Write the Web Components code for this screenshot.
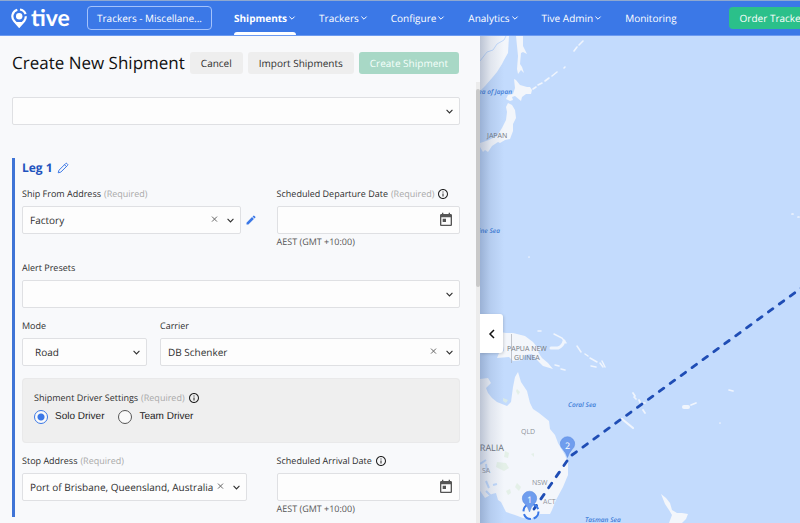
<!DOCTYPE html>
<html lang="en">
<head>
<meta charset="utf-8">
<title>Create New Shipment</title>
<style>
  html, body { height: 100%; }
  body { margin: 0; font: 10px/16px "Open Sans", "Noto Sans", sans-serif; text-rendering: geometricPrecision; color: #2f2f2f; background: #f8f9fb; overflow: hidden; }
</style>
</head>
<body>
<tive-app></tive-app>
<script>
const CHEVRON = '<svg class="chev" viewBox="0 0 8 8" width="8" height="8" aria-hidden="true"><path d="M1.4 2.6 4 5.2 6.6 2.6" fill="none" stroke="currentColor" stroke-width="1"/></svg>';
const INFO = '<svg viewBox="0 0 24 24" width="12" height="12" role="img" aria-label="Info"><path fill="#222" d="M11 7h2v2h-2zm0 4h2v6h-2zm1-9C6.48 2 2 6.48 2 12s4.48 10 10 10 10-4.48 10-10S17.52 2 12 2zm0 18c-4.41 0-8-3.59-8-8s3.59-8 8-8 8 3.59 8 8-3.59 8-8 8z"/></svg>';
const RESET = '*{box-sizing:border-box} button,select,input{font:inherit;color:inherit;margin:0;text-rendering:inherit} button{border:0;background:none;padding:0;cursor:pointer} svg{display:block;flex:none}';

function define(name, html) {
  customElements.define(name, class extends HTMLElement {
    constructor() {
      super();
      this.attachShadow({ mode: 'open' });
    }
    connectedCallback() {
      const t = document.createElement('template');
      const markup = typeof html === 'function' ? html(this) : html;
      t.innerHTML = '<style>' + RESET + '</style>' + markup;
      this.shadowRoot.replaceChildren(t.content.cloneNode(true));
    }
  });
}

define('tive-logo', `
<style>
  :host { display: block; }
  a { display: flex; align-items: center; gap: 4px; color: #fff; text-decoration: none; font: 700 23px/28px Lato, sans-serif; }
  span { padding-bottom: 2px; }
</style>
<a href="#" aria-label="tive home">
  <svg viewBox="0 0 16 20" width="16" height="20" aria-hidden="true">
    <path d="M6.3 1.7A6.9 6.9 0 0 0 3.2 13l5 5.6 5-5.6a6.9 6.9 0 0 0 1.6-4.7" fill="none" stroke="#fff" stroke-width="2.2"/>
    <path d="M9 1.500a7 7 0 0 1 5.600 4.700" fill="none" stroke="#fff" stroke-width="2.2"/>
    <path d="M4.500 14h7.400l-3.700 4.600z" fill="#fff"/>
    <circle cx="8.2" cy="8.2" r="3.2" fill="#fff"/>
  </svg><span>tive</span>
</a>`);

define('nav-item', el => `
<style>
  :host { display: flex; flex: none; }
  button, a { display: flex; align-items: center; gap: 1px; height: 100%; color: #fff; text-decoration: none; position: relative; white-space: nowrap; }
  :host([active]) { font-weight: 700; }
  :host([active]) button::after { content: ""; position: absolute; left: 0; right: 0; bottom: 0; height: 3px; background: #fff; border-radius: 3px 3px 0 0; }
</style>
${el.hasAttribute('href') ? `<a href="${el.getAttribute('href')}"><slot></slot></a>` : `<button type="button" aria-haspopup="true"><slot></slot>${CHEVRON}</button>`}`);

define('app-header', `
<style>
  :host { display: flex; align-items: stretch; height: 36px; flex: none; background: #3b78e7; border-top: 1px solid #8fa8cf; border-bottom: 1px solid #6c9af0; padding-left: 11px; color: #fff; overflow: hidden; }
  tive-logo { align-self: center; flex: none; width: 76px; }
  .account { align-self: center; flex: none; width: 125px; height: 24px; border: 1px solid #a4c2fb; border-radius: 4px; }
  nav { display: flex; gap: 23px; margin-left: 22px; flex: none; }
  .order { align-self: center; flex: none; margin-left: 52px; padding: 0 11px; height: 22px; border-radius: 4px; background: #2bc08a; }
</style>
<tive-logo></tive-logo>
<button class="account" type="button">Trackers - Miscellane...</button>
<nav>
  <nav-item active>Shipments</nav-item>
  <nav-item>Trackers</nav-item>
  <nav-item>Configure</nav-item>
  <nav-item>Analytics</nav-item>
  <nav-item>Tive Admin</nav-item>
  <nav-item href="#monitoring">Monitoring</nav-item>
</nav>
<button class="order" type="button">Order Trackers</button>`);

const FIELD_STYLE = `
  :host { display: block; min-width: 0; }
  .label { display: flex; align-items: center; gap: 3px; height: 16px; margin-bottom: 4px; font-size: 9px; white-space: nowrap; }
  .req { color: #a9a9a9; }
  .row { display: flex; align-items: center; }
  .box { position: relative; flex: 1; min-width: 0; height: 28px; }
  select, input { display: block; width: 100%; height: 100%; border: 1px solid #dfe0e3; border-radius: 2px; background: #fdfdfd; padding: 0 7px; appearance: none; outline: 0; text-overflow: ellipsis; }
`;
const labelMarkup = el => el.hasAttribute('label') ? `<div class="label"><label for="c">${el.getAttribute('label')}</label>${el.hasAttribute('required') ? '<span class="req">(Required)</span>' : ''}${el.hasAttribute('info') ? INFO : ''}</div>` : '';

define('select-field', el => `
<style>${FIELD_STYLE}
  :host([inset]) select { padding-left: 12px; }
  :host([trail]) .row { padding-right: 20px; }
  .chev { position: absolute; right: 6px; top: 10px; pointer-events: none; }
  .clear { position: absolute; right: 22px; top: 9px; width: 9px; height: 9px; color: #666; }
  .edit { width: 22px; height: 20px; margin-left: 4px; }
</style>
${labelMarkup(el)}
<div class="row"><div class="box">
  <select id="c" ${el.hasAttribute('label') ? '' : 'aria-label="Shipment template"'}><option>${el.getAttribute('value') || ''}</option></select>
  ${el.hasAttribute('clearable') ? '<button class="clear" type="button" aria-label="Clear"><svg viewBox="0 0 9 9" width="9" height="9"><path d="M2 1.6 7 6.6M7 1.6 2 6.6" fill="none" stroke="currentColor"/></svg></button>' : ''}
  ${CHEVRON.replace('width="8" height="8"', 'width="9" height="9"')}
</div>${el.hasAttribute('editable') ? '<button class="edit" type="button" aria-label="Edit address"><svg viewBox="0 0 24 24" width="12" height="12"><path fill="#3b78e7" d="M3 17.25V21h3.75L17.81 9.94l-3.75-3.75L3 17.25zM20.71 7.04a1 1 0 0 0 0-1.41l-2.34-2.34a1 1 0 0 0-1.41 0l-1.83 1.83 3.75 3.75 1.83-1.83z"/></svg></button>' : ''}</div>`);

define('date-field', el => `
<style>${FIELD_STYLE}
  button { position: absolute; right: 6px; top: 6px; }
  .zone { font-size: 9px; color: #555; }
</style>
${labelMarkup(el)}
<div class="row"><div class="box">
  <input id="c" type="text" autocomplete="off">
  <button type="button" aria-label="Open calendar"><svg viewBox="0 0 24 24" width="16" height="16"><path fill="#555" d="M19 3h-1V1h-2v2H8V1H6v2H5c-1.11 0-1.99.9-1.99 2L3 19c0 1.1.89 2 2 2h14c1.1 0 2-.9 2-2V5c0-1.1-.9-2-2-2zm0 16H5V8h14v11zM7 10h5v5H7z"/></svg></button>
</div></div>
<div class="zone">AEST (GMT +10:00)</div>`);

define('driver-settings', `
<style>
  :host { display: block; margin-top: 2px; }
  fieldset { margin: 0; min-width: 0; height: 65px; padding: 11px; border: 1px solid #e9e9ea; border-radius: 4px; background: #efefef; }
  .head { display: flex; align-items: center; gap: 3px; font-size: 9px; }
  .req { color: #a9a9a9; }
  .opts { display: flex; gap: 14px; margin-top: 3px; font-family: "Liberation Sans", sans-serif; color: #222; }
  label { display: flex; align-items: center; gap: 7px; }
  input { appearance: none; width: 14px; height: 14px; border: 1px solid #555; border-radius: 50%; background: #fafafa; }
  input:checked { border-color: #3b78e7; background: radial-gradient(circle, #3b78e7 3px, #fafafa 4px); }
</style>
<fieldset aria-labelledby="t">
  <div class="head"><span id="t">Shipment Driver Settings</span><span class="req">(Required)</span>${INFO}</div>
  <div class="opts">
    <label><input type="radio" name="driver" checked>Solo Driver</label>
    <label><input type="radio" name="driver">Team Driver</label>
  </div>
</fieldset>`);

define('shipment-leg', el => `
<style>
  :host { display: block; border-left: 3px solid #3f74d6; padding-left: 7px; }
  header { display: flex; align-items: center; gap: 4px; height: 20px; margin-bottom: 8px; }
  h2 { margin: 0; font-size: 12px; line-height: 20px; color: #2152bd; }
  .rows { display: grid; gap: 10px; }
</style>
<header><h2>${el.getAttribute('heading')}</h2>
  <button type="button" aria-label="Rename leg"><svg viewBox="0 0 12 12" width="12" height="12"><path d="M1.2 10.8 2 8.2 8.6 1.6q.7-.7 1.4 0l.5.5q.7.7 0 1.4L3.8 10.1zM7.5 2.7l1.9 1.9" fill="none" stroke="#3b78e7"/></svg></button>
</header>
<div class="rows"><slot></slot></div>`);

define('form-row', `
<style>
  :host { display: grid; grid-template-columns: 4fr 3fr; gap: 10px; align-items: start; }
  :host([kind="carrier"]) { grid-template-columns: 5fr 12fr; gap: 13px; }
</style><slot></slot>`);

define('shipment-panel', `
<style>
  :host { display: flex; flex-direction: column; background: #f8f9fb; min-width: 0; }
  .top { display: flex; align-items: center; gap: 5px; padding: 16px 12px 8px; white-space: nowrap; }
  h1 { margin: 0; font-size: 17px; line-height: 22px; font-weight: 400; color: #111; }
  .top button { height: 22px; padding: 0 11px; border-radius: 3px; background: #eee; }
  .top button.primary { background: #a8d8c6; color: #f5fffb; }
  .body { display: flex; flex: 1; min-height: 0; overflow: hidden; }
  form { flex: 1; min-width: 0; padding: 15px 16px 0 12px; }
  shipment-leg { margin-top: 33px; }
  .bar { flex: none; width: 4px; background: #ececec; }
  .bar::before { content: ""; display: block; height: 45%; margin-top: 7px; background: #c9c9c9; border-radius: 2px; }
</style>
<div class="top"><h1>Create New Shipment</h1><button type="button">Cancel</button><button type="button">Import Shipments</button><button type="button" class="primary">Create Shipment</button></div>
<div class="body">
  <form>
    <select-field></select-field>
    <shipment-leg heading="Leg 1">
      <form-row>
        <select-field label="Ship From Address" required value="Factory" clearable editable></select-field>
        <date-field label="Scheduled Departure Date" required info></date-field>
      </form-row>
      <select-field label="Alert Presets"></select-field>
      <form-row kind="carrier">
        <select-field label="Mode" value="Road" inset></select-field>
        <select-field label="Carrier" value="DB Schenker" clearable></select-field>
      </form-row>
      <driver-settings></driver-settings>
      <form-row>
        <select-field label="Stop Address" required value="Port of Brisbane, Queensland, Australia" clearable trail></select-field>
        <date-field label="Scheduled Arrival Date" info></date-field>
      </form-row>
    </shipment-leg>
  </form>
  <div class="bar"></div>
</div>`);

define('route-map', `
<style>
  :host { display: block; position: relative; min-width: 0; overflow: hidden; background: #c3dbfd; }
  .map { width: 100%; height: 100%; }
  .shade { position: absolute; inset: 0 auto 0 0; width: 24px; background: linear-gradient(90deg, rgba(60,80,120,.3), rgba(60,80,120,.1) 45%, transparent); pointer-events: none; }
  .fold { position: absolute; left: 0; top: 278px; width: 23px; height: 39px; background: #fff; border-radius: 0 3px 3px 0; display: grid; place-items: center; box-shadow: 1px 1px 3px rgba(0,0,0,.15); }
  text { font-family: "Open Sans", sans-serif; }
  .sea text { font-size: 6.5px; font-style: italic; fill: #3d7bd8; font-weight: 600; }
  .place text { font-size: 7px; fill: #6f747b; }
</style>
<svg class="map" viewBox="480 36 320 487" preserveAspectRatio="xMinYMin slice" role="img" aria-label="Shipment route map">
  <g fill="#f3f6fb">
    <path d="M480 36h29l-1 17-4 7-2 4-5 8-5 6-7 8-5 5z"/>
    <path d="M516 36l1 10 1 10-1 13 1 5 3-4 3 3-2-6-2-3 1-11 2-1 4 2-4-8 0-10z"/>
    <path d="M514 79l2 1 4 5 7 2 3 0 2 3-1 4-5 0-4 3-1 4-6-5-3 1 1 3-3 1-4-2 2-4 5-1 2-6z"/>
    <path d="M508 103l4 2 3 5 1 8-3 6 0 7-3 8-5 1-5 3-2-1-6 4-4 6-3-2-2 2-3-5 0-4 9-3 8-4 5-8 4-8 1-8-1-5z"/>
    <path d="M500 332l6 1 7 0 12 3 8 6 4 5 6 1-5 4 4 6 6 5 5 6-10-3-5-5-6-7-7 1-2 5-10 1-4-4-12 1 2-5 5-2z"/>
    <path d="M480 379l8-1 3 5-5 5 2 5 4 5 5 4 10 4 4-4 2-15 2-10 3-5 3 10 6 9 3 12 3 6 6 4 5 4 5 4 1 8 5 6 3 8 7 12 3 8 0 12-5 12-7 13-4 10-2 4-10 0-9 5-8-1-8-3-9-3-5-10-3-2-2-7-4 1-7 4-7-10z"/>
    <path d="M661 494l5 4 4 5 2 7 5 3 5 0 6 1-2 5-4 4h-13l3-8-3-5-4-6z"/>
  </g>
  <g fill="none" stroke="#f0f5fd" stroke-linecap="round">
    <path d="M533 89l3-2m2-2l4-2m3-2l4-3m3-2l5-4m7-4l1-1m9-16l3-4m2-2l4-4" stroke-width="1.6"/>
    <path d="M551 348h7q5-2 6-7" stroke-width="3"/>
    <path d="M554 334l8 4 4 5M538 331l3 0M577 346l4 6m4 2l3 2m2 2l7 4m3 1l3 4m-1-6l3 6m-14-1l5 1m-41-2l4 1m2 3l4 1" stroke-width="1.5"/>
    <path d="M622 419l11 9" stroke-width="2.2"/>
    <path d="M633 393l2 3m-1 1l2 2m3 1l1 2m3 1l2 0m-2 7l2 3m46-8l5-2m33-13l4 1M529 257h0m263-43h1m5 3h1m-79 206h0" stroke-width="1.7"/>
    <path d="M684 407h4" stroke-width="4"/>
  </g>
  <g fill="#dfeee2"><path d="M517 389l3 3-2 3-2-4zM503 398l5 2-2 3-3-2zM505 451l4 2-1 5-4-1zM497 462l9 1 3 5-5 3-8-4zM517 483l4 4-2 4-4-4zM531 454l3-1 0 4zM506 491l4-2 1 4-3 2z" opacity=".75"/></g>
  <g fill="none" stroke="#c3dbfd" stroke-width="2"><path d="M480 464l6-4m0 4l1 7m-1 10l3 7m4-3l4-1m-11 7l5 5"/><path d="M480 61l7-9 6-2 4-6 7-4 2-4" stroke-width="1"/></g>
  <path d="M511.500 334v29" stroke="#a9aeb6" stroke-width=".7"/>
  <g class="sea">
    <text x="512" y="94" text-anchor="end">Sea of Japan</text>
    <text x="500" y="233" text-anchor="end">Philippine Sea</text>
    <text x="568" y="407">Coral Sea</text>
    <text x="585" y="522">Tasman Sea</text>
  </g>
  <g class="place">
    <text x="487" y="138">JAPAN</text>
    <text x="507" y="351">PAPUA NEW</text>
    <text x="514" y="360">GUINEA</text>
    <text x="521" y="434" fill-opacity=".8">QLD</text>
    <text x="504" y="451" text-anchor="end" style="font-size:9px">AUSTRALIA</text>
    <text x="482" y="473" fill-opacity=".8">SA</text>
    <text x="532" y="485" fill-opacity=".8">NSW</text>
    <text x="543" y="504" fill-opacity=".8">ACT</text>
  </g>
  <g fill="none" stroke="#1f4db5" stroke-width="2.8" stroke-linecap="round">
    <path d="M572 455 802 287.500" stroke-dasharray="5.500 8"/>
    <path d="M567 461 534 509" stroke-dasharray="5.500 8"/>
    <circle cx="531" cy="511.500" r="7.500" stroke="#3b78e7" stroke-width="2" stroke-linecap="butt" stroke-dasharray="9 2.780"/>
  </g>
  <g fill="#6f9dee" stroke="#5686de" stroke-width=".5">
    <path d="M567.500 457.500q-1.500-5-4.500-8a7.200 7.200 0 1 1 9 0q-3 3-4.500 8z"/>
    <path d="M529.500 512q-1.500-5-4.500-8a7.200 7.200 0 1 1 9 0q-3 3-4.500 8z"/>
  </g>
  <g fill="#fff" font-size="9" text-anchor="middle"><text x="567.500" y="449">2</text><text x="529.500" y="503">1</text></g>
</svg>
<div class="shade"></div>
<button class="fold" type="button" aria-label="Collapse panel"><svg viewBox="0 0 8 10" width="8" height="10"><path d="M6 1 2 5l4 4" fill="none" stroke="#111" stroke-width="1.500"/></svg></button>`);

define('tive-app', `
<style>
  :host { display: flex; flex-direction: column; height: 100vh; }
  main { flex: 1; min-height: 0; display: grid; grid-template-columns: 3fr 2fr; grid-template-rows: minmax(0, 1fr); }
</style>
<app-header></app-header>
<main><shipment-panel></shipment-panel><route-map></route-map></main>`);
</script>
</body>
</html>
